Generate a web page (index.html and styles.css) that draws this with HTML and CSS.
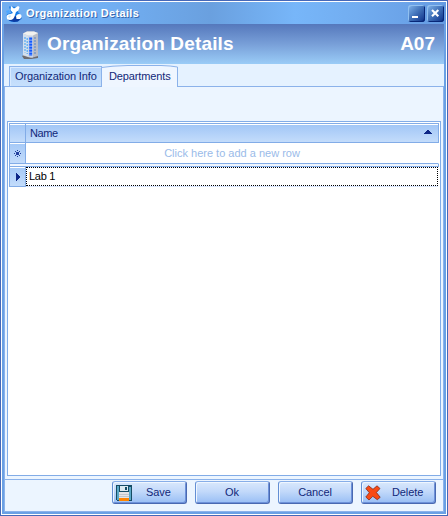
FILE: index.html
```html
<!DOCTYPE html>
<html lang="en">
<head>
<meta charset="utf-8">
<title>Organization Details</title>
<link rel="stylesheet" href="styles.css">
</head>
<body>
<div class="window">
  <div class="frame">
    <div class="titlebar">
      <svg class="app-icon" width="16" height="16" viewBox="0 0 16 16">
        <path d="M3 .5L13 1L12 6L15.5 10V13L11 15.8H5L0 12L1 8L5 7Z" fill="#167be6"/>
        <path d="M1 12Q8 8 15.5 12L12 15.5L8 16L3 14.5Z" fill="#0c3ba2"/>
        <path d="M5 0L8 2.5L12 0L13.5 1L12.5 4.5L10 6L9 9Q8 14 4 14Q0 14 .5 10.5Q1 8 4.5 8L7 7L4.5 4Z" fill="#fff"/>
        <path d="M10 10Q12 7 15 8.5Q16.5 11 14 13L10.5 13Z" fill="#fff"/>
        <path d="M2 10.5L4 9L5 10L3.5 12Z" fill="#c7e8ff"/>
        <path d="M0 5L3 4L4 6L1 8Z" fill="#4ea7ff"/>
      </svg>
      <span class="title">Organization Details</span>
      <span class="winbtn"><svg width="17" height="17" viewBox="0 0 17 17" shape-rendering="crispEdges"><path d="M4 11h6v2H4z" fill="#fff"/></svg></span>
      <span class="winbtn"><svg width="17" height="17" viewBox="0 0 17 17"><path d="M5 5L11.3 11.3M11.3 5L5 11.3" stroke="#fff" stroke-width="2.1"/></svg></span>
    </div>
    <div class="client">
      <header class="banner">
        <svg class="building" width="20" height="30" viewBox="0 0 20 30">
          <path d="M1 26L4 24H15L17 26V28L10 29H3Z" fill="#6c6b70"/>
          <path d="M2 3.5L6 1.5H13L17 3V26L10 28L2 25.5Z" fill="#b9bcc4"/>
          <path d="M2 3.5L8 6V27L2 25Z" fill="#d3dfed"/>
          <path d="M7 5.5L12 5V27.5L7 26.5Z" fill="#c8d4e8"/>
          <path d="M2 3.5L6 1.5H13L17 3L12 5.5H7Z" fill="#f1f1ef"/>
          <path d="M4 7V22.5M6.2 8V24" stroke="#4ba5f4" stroke-width="1.1" stroke-dasharray="2 1"/>
          <path d="M9.7 7.5V26" stroke="#1259ff" stroke-width="3" stroke-dasharray="2.2 .8"/>
          <path d="M14 7V24" stroke="#7596c8" stroke-width="1.4" stroke-dasharray="2 1"/>
        </svg>
        <h1>Organization Details</h1>
        <strong>A07</strong>
      </header>
      <nav class="tabs">
        <div class="tab"><span>Organization Info</span></div>
        <div class="tab active">
          <svg width="77" height="22" viewBox="0 0 77 22"><path d="M.5 22V2.5L12 1.2L27 .5H60Q70 .8 76.5 2V22" fill="#eff6ff" stroke="#8bb2ea"/></svg>
          <span>Departments</span>
        </div>
      </nav>
      <main class="panel">
        <div class="grid">
          <div class="row head">
            <div class="mark"></div>
            <div class="cell"><span>Name</span><svg width="8" height="4" viewBox="0 0 8 4" shape-rendering="crispEdges"><path d="M3 0h2v1h1v1h1v1h1v1H0V3h1V2h1V1h1z" fill="#0d2687"/></svg></div>
          </div>
          <div class="row add">
            <div class="mark"><svg width="7" height="7" viewBox="0 0 7 7" shape-rendering="crispEdges"><path d="M3 0h1v1H3zM1 1h1v1H1zM5 1h1v1H5zM2 2h1v1H2zM3 2h1v1H3zM4 2h1v1H4zM0 3h1v1H0zM2 3h3v1H2zM6 3h1v1H6zM2 4h3v1H2zM1 5h1v1H1zM5 5h1v1H5zM3 6h1v1H3z" fill="#233f9d"/></svg></div>
            <div class="cell"><span>Click here to add a new row</span></div>
          </div>
          <div class="divider"></div>
          <div class="row data">
            <div class="mark"><svg width="4" height="8" viewBox="0 0 4 8" shape-rendering="crispEdges"><path d="M0 0h1v1h1v1h1v1h1v2H3v1H2v1H1v1H0z" fill="#0d2687"/></svg></div>
            <div class="cell"><span>Lab 1</span></div>
          </div>
        </div>
      </main>
      <footer class="actions">
        <div class="button icon">
          <svg width="16" height="16" viewBox="0 0 16 16" shape-rendering="crispEdges">
            <path d="M0 0H16V16H1V15H0Z" fill="#164c64"/>
            <path d="M1 1H3V15H1ZM13 2H15V15H13Z" fill="#5ba8c8"/>
            <path d="M4 1H12V6H4Z" fill="#dceaf0"/><path d="M9 2H11V5H9Z" fill="#164c64"/>
            <path d="M3 7H13V13H3Z" fill="#e4e4e6"/><path d="M3 9H13V10H3ZM3 11H13V12H3Z" fill="#c3c7cc"/>
            <path d="M3 13H13V16H3Z" fill="#ff8500"/>
          </svg>
          <span class="save">Save</span>
        </div>
        <div class="button"><span class="ok">Ok</span></div>
        <div class="button"><span class="cancel">Cancel</span></div>
        <div class="button icon">
          <svg width="16" height="16" viewBox="0 0 16 16"><path d="M3.6 .8L8 4.3L12 .8L15 3.5L11.4 7.5L15.2 12.3L12.3 14.7L7.8 11.3L4 15L.8 12L4.3 7.7L.8 3.5Z" fill="#f94a14" stroke="#852c1b" stroke-width=".8" stroke-linejoin="round"/></svg>
          <span class="delete">Delete</span>
        </div>
      </footer>
    </div>
  </div>
</div>
</body>
</html>
```
FILE: styles.css
```css
* { box-sizing: border-box; }
body { margin: 0; font: 11px/13px "Liberation Sans", Arial, sans-serif; color: #122879; }
svg { display: block; flex: none; }
span, h1, strong { white-space: nowrap; }
.window { width: 448px; height: 516px; padding: 1px; background: #4668b8; }
.frame { height: 514px; border: 1px solid #fff; padding: 0 2px 2px; background: #6aa0e4; display: flex; flex-direction: column; }
.titlebar { height: 22px; margin: 0 -2px; padding: 2px 1px 1px 4px; display: flex; align-items: center; background: linear-gradient(90deg, #72aef0 0, #72b0f4 22%, #6aa0df 47%, #77b6f9 66%, #72adf0 80%, #659be2 100%); }
.title { margin: -1px auto 0 4px; color: #fff; font-weight: bold; font-size: 11px; text-shadow: 1px 1px 0 #3867ad; letter-spacing: .34px; }
.winbtn { width: 17px; height: 17px; margin: 0 1px; border-radius: 3px; background: linear-gradient(135deg, #83b7ed, #4677bd 45%, #092c86); box-shadow: inset 1px 1px 0 #91c0f0, inset -1px -1px 0 #082777; }
.client { height: 488px; background: #ecf5ff; display: flex; flex-direction: column; }
.banner { height: 40px; padding: 0 9px 0 17px; background: linear-gradient(#5578bc, #789fd8 50%, #9accf7); display: flex; align-items: center; color: #fff; }
.building { margin-top: 2px; }
h1, strong { margin: 0; font-size: 19px; line-height: 22px; font-weight: bold; }
h1 { margin-left: 6px; margin-right: auto; letter-spacing: .15px; }
.tabs { height: 22px; padding-left: 5px; background: #e5f2ff; display: flex; align-items: flex-end; }
.tab { height: 20px; width: 93px; border: 1px solid #8bb2ea; border-bottom: 0; background: linear-gradient(#b5d4fa, #c7e0fc); box-shadow: inset 1px 1px #d8eaff; padding: 3px 0 0 5px; letter-spacing: -.12px; }
.tab.active { width: 77px; height: 22px; margin: 0 0 -1px -1px; border: 0; background: none; box-shadow: none; padding: 0; display: grid; z-index: 1; }
.active svg, .active span { grid-area: 1 / 1; }
.active span { padding: 5px 0 0 8px; }
.panel { height: 393px; border: 1px solid #8bb2ea; border-bottom: 0; padding: 34px 2px 3px 2px; }
.grid { height: 355px; border: 1px solid #82ace7; background: #fff; padding: 1px; }
.row { display: flex; border: 1px solid #82ace7; }
.row + .row { border-top: 0; }
.mark { width: 16px; border-right: 1px solid #82ace7; background: linear-gradient(#a5c9f7, #c3dcfb); box-shadow: inset 0 1px #fff; display: flex; align-items: center; justify-content: center; }
.row .cell { flex: 1; display: flex; align-items: center; }
.head { height: 20px; }
.head .mark, .head .cell { background: linear-gradient(#a0c5f6, #c3dcfb); box-shadow: inset 0 1px #fff; }
.head .cell { padding: 0 6px 0 4px; justify-content: space-between; letter-spacing: -.4px; }
.head svg { margin-top: -2px; }
.add { height: 21px; border-right-color: #fff; }
.add .cell { justify-content: center; color: #9abbe9; }
.divider { height: 3px; border: 1px solid #82ace7; border-top: 0; background: #eff6ff; }
.data { height: 20px; border-top: 0; border-right: 0; border-bottom: 0; }
.data .mark { border-bottom: 1px solid #82ace7; }
.data .cell { margin: 0 1px 1px 0; border: 1px dotted #000; box-shadow: 0 1px #dbe8ff; color: #000; padding-left: 2px; letter-spacing: -.3px; }
.actions { height: 33px; border: 1px solid #8bb2ea; padding: 1px 7px 0 0; display: flex; justify-content: flex-end; gap: 8px; }
.button { width: 75px; height: 23px; border: 1px solid #638fd4; border-color: #87aee8 #4969b1 #4969b1 #638fd4; border-radius: 3px; background: linear-gradient(#d9e8fc, #c2d9fa 45%, #98bef5); box-shadow: inset 1px 1px #eff6ff, inset -1px -1px #6d91d9; display: flex; align-items: center; justify-content: center; padding-right: 1px; letter-spacing: -.1px; }
.icon { justify-content: flex-start; padding-left: 3px; }
.icon .save { margin-left: 14px; }
.icon .delete { margin-left: 11px; }
```
